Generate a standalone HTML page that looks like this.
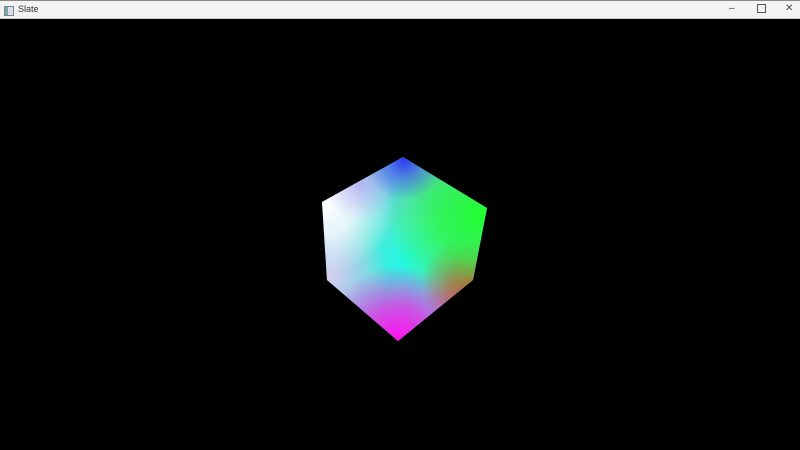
<!DOCTYPE html>
<html><head><style>
body{margin:0;width:800px;height:450px;background:#000;overflow:hidden;font-family:"Liberation Sans",sans-serif}
#tb{position:absolute;left:0;top:0;width:800px;height:19px;background:#f3f3f3;border-top:1px solid #888;border-bottom:1px solid #ccc;box-sizing:border-box}
#tb .t{position:absolute;left:18px;top:3px;font-size:9px;color:#333}
#tb .ic{position:absolute;left:4px;top:5px;width:8px;height:8px;border:1px solid #789;background:linear-gradient(90deg,#7a9 0 40%,#dde 40%)}
.c{position:absolute;top:2px;font-size:10px;color:#444}
#cube{position:absolute;left:320px;top:155px;width:170px;height:188px;
clip-path:polygon(83px 2px,167px 53px,153px 125px,78px 186px,7px 125px,2px 47px);
background:
radial-gradient(circle at 84px 5px,#2a3cf0 0,rgba(60,70,240,.5) 18px,transparent 40px),
radial-gradient(circle at 40px 30px,rgba(170,150,240,.6) 0,transparent 35px),
radial-gradient(circle at 160px 60px,#20ff30 0,rgba(40,250,60,.75) 45px,transparent 95px),
radial-gradient(circle at 152px 130px,#ff2030 0,rgba(255,30,60,.7) 22px,transparent 50px),
radial-gradient(circle at 78px 186px,#ff10f0 0,rgba(240,40,230,.75) 35px,transparent 75px),
radial-gradient(circle at 5px 50px,#fff 0,rgba(255,255,255,.8) 30px,transparent 70px),
radial-gradient(circle at 8px 122px,#d8d0f0 0,rgba(200,200,240,.6) 30px,transparent 60px),
radial-gradient(circle at 85px 105px,#20f8e8 0,#50e8d8 40px,#70c0e0 90px);}
</style></head><body>
<div id="tb"><div class="ic"></div><div class="t">Slate</div>
<div class="c" style="left:729px">–</div><div class="c" style="left:757px;top:3px;width:7px;height:7px;border:1px solid #555"></div><div class="c" style="left:785px">✕</div></div>
<div id="cube"></div>
</body></html>
